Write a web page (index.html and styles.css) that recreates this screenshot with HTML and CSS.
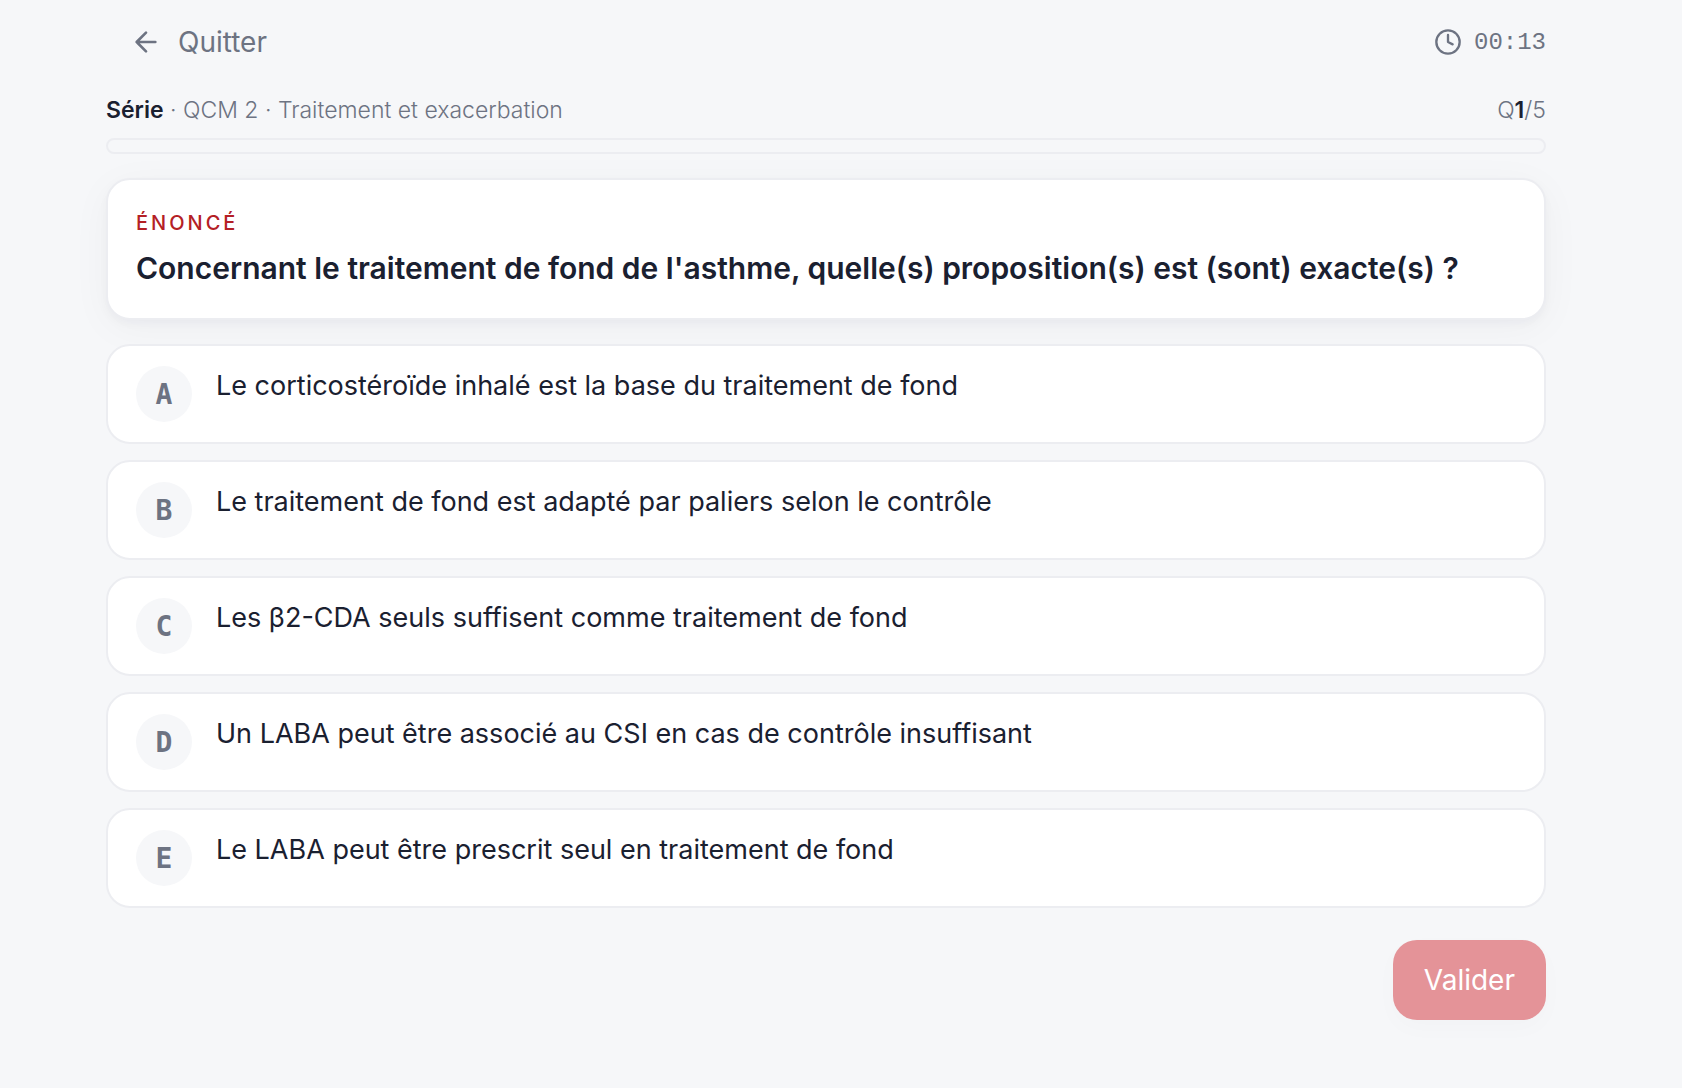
FILE: index.html
```html
<!DOCTYPE html>
<html lang="fr">
<head>
  <meta charset="utf-8">
  <meta name="viewport" content="width=device-width, initial-scale=1">
  <title>Série · QCM 2</title>
  <link rel="stylesheet" href="styles.css">
</head>
<body>
  <main class="quiz">
    <header class="topbar">
      <button class="quit" type="button">
        <svg class="quit-icon" viewBox="0 0 24 24" aria-hidden="true"><path d="M19 12H5M12 19l-7-7 7-7"/></svg>
        <span>Quitter</span>
      </button>
      <div class="timer">
        <svg class="timer-icon" viewBox="0 0 24 24" aria-hidden="true"><circle cx="12" cy="12" r="10"/><path d="M12 6v6l4 2"/></svg>
        <time class="timer-value">00:13</time>
      </div>
    </header>

    <div class="meta">
      <p class="series"><strong>Série</strong> · QCM 2 · Traitement et exacerbation</p>
      <p class="counter">Q<strong>1</strong>/5</p>
    </div>
    <div class="progress" role="progressbar" aria-label="Progression" aria-valuemin="0" aria-valuemax="5" aria-valuenow="0"></div>

    <section class="statement">
      <p class="eyebrow">ÉNONCÉ</p>
      <h1 class="question">Concernant le traitement de fond de l'asthme, quelle(s) proposition(s) est (sont) exacte(s) ?</h1>
    </section>

    <div class="answers">
      <button class="answer" type="button" aria-pressed="false"><span class="letter">A</span><span class="answer-text">Le corticostéroïde inhalé est la base du traitement de fond</span></button>
      <button class="answer" type="button" aria-pressed="false"><span class="letter">B</span><span class="answer-text">Le traitement de fond est adapté par paliers selon le contrôle</span></button>
      <button class="answer" type="button" aria-pressed="false"><span class="letter">C</span><span class="answer-text">Les β2-CDA seuls suffisent comme traitement de fond</span></button>
      <button class="answer" type="button" aria-pressed="false"><span class="letter">D</span><span class="answer-text">Un LABA peut être associé au CSI en cas de contrôle insuffisant</span></button>
      <button class="answer" type="button" aria-pressed="false"><span class="letter">E</span><span class="answer-text">Le LABA peut être prescrit seul en traitement de fond</span></button>
    </div>

    <footer class="actions">
      <button class="submit" type="button" disabled>Valider</button>
    </footer>
  </main>
</body>
</html>
```
FILE: styles.css
```css
:root {
  --bg: #f6f7f9;
  --card: #ffffff;
  --line: #ecedf1;
  --ink: #1a2030;
  --muted: #6d7382;
  --red: #b42025;
  --radius: 24px;
}

* {
  box-sizing: border-box;
}

body {
  margin: 0;
  background: var(--bg);
  color: var(--ink);
  font-family: "Inter", sans-serif;
  font-size: 28px;
  line-height: 40px;
}

p,
h1 {
  margin: 0;
}

button {
  font: inherit;
  color: inherit;
  border: 0;
  background: none;
}

.quiz {
  padding: 14px 136px 68px 106px;
}

.topbar,
.meta {
  display: flex;
  align-items: center;
  justify-content: space-between;
}

.topbar {
  height: 56px;
  color: var(--muted);
}

.quit {
  display: flex;
  align-items: center;
  gap: 16px;
  padding: 0 24px;
}

.quit-icon,
.timer-icon {
  fill: none;
  stroke: currentColor;
  stroke-width: 2;
  stroke-linecap: round;
  stroke-linejoin: round;
}

.quit-icon {
  width: 32px;
  height: 32px;
}

.timer {
  display: flex;
  align-items: center;
  gap: 12px;
}

.timer-value {
  padding-top: 2px;
  font-family: "Liberation Mono", monospace;
  font-size: 24px;
}

.timer-icon {
  width: 28px;
  height: 28px;
}

.meta {
  margin-top: 24px;
  font-size: 23px;
  font-weight: 350;
  line-height: 32px;
  color: var(--muted);
}

.meta strong {
  color: var(--ink);
  font-weight: 600;
}

.progress {
  height: 16px;
  margin-top: 12px;
  border: 2px solid var(--line);
  border-radius: 8px;
}

.statement {
  margin-top: 24px;
  padding: 28px;
  border: 2px solid var(--line);
  border-radius: var(--radius);
  background: var(--card);
  box-shadow: 0 4px 8px rgba(26, 32, 48, 0.03), 0 8px 40px rgba(26, 32, 48, 0.04);
}

.eyebrow {
  color: var(--red);
  font-size: 20px;
  line-height: 30px;
  font-weight: 500;
  letter-spacing: 3px;
}

.question {
  margin-top: 8px;
  font-size: 30px;
  line-height: 44px;
  font-weight: 600;
}

.answers {
  display: flex;
  flex-direction: column;
  gap: 16px;
  margin-top: 24px;
}

.answer {
  display: flex;
  align-items: flex-start;
  gap: 24px;
  padding: 20px 28px;
  border: 2px solid var(--line);
  border-radius: var(--radius);
  background: var(--card);
  font-size: 27px;
  text-align: left;
}

.letter {
  display: grid;
  place-items: center;
  flex: none;
  width: 56px;
  height: 56px;
  padding-top: 2px;
  border-radius: 50%;
  background: var(--bg);
  color: var(--muted);
  font-family: "DejaVu Sans Mono", monospace;
  font-size: 28px;
  font-weight: 700;
}

.actions {
  display: flex;
  justify-content: flex-end;
  margin-top: 32px;
}

.submit {
  padding: 20px 31px;
  border-radius: var(--radius);
  background: #e49398;
  color: #ffffff;
  box-shadow: 0 8px 24px rgba(26, 32, 48, 0.02);
}
```
